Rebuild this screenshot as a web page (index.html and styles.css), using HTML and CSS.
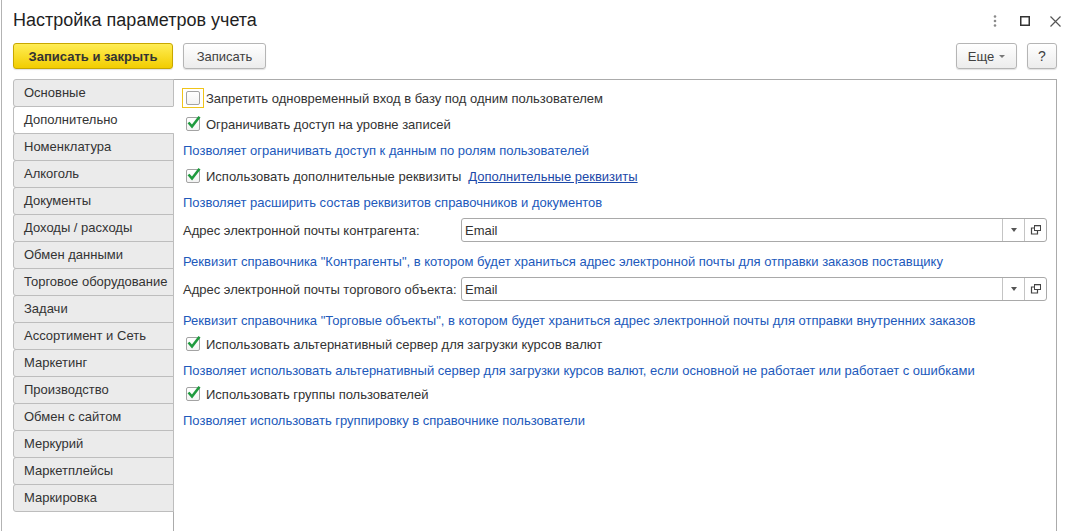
FILE: index.html
```html
<!DOCTYPE html>
<html lang="ru">
<head>
<meta charset="utf-8">
<title>Настройка параметров учета</title>
<link rel="stylesheet" href="styles.css">
</head>
<body>
<div class="window">
  <div class="titlebar">
    <h1 class="title">Настройка параметров учета</h1>
    <div class="win-icons">
      <span class="wi"><svg width="4" height="12" viewBox="0 0 4 12"><circle cx="2" cy="1.5" r="1.3" fill="#8a8a8a"/><circle cx="2" cy="6" r="1.3" fill="#8a8a8a"/><circle cx="2" cy="10.5" r="1.3" fill="#8a8a8a"/></svg></span>
      <span class="wi"><svg width="10" height="10" viewBox="0 0 10 10"><rect x="0.75" y="0.75" width="8.5" height="8.5" fill="none" stroke="#333" stroke-width="1.5"/></svg></span>
      <span class="wi"><svg width="11" height="11" viewBox="0 0 11 11"><path d="M0.5 0.5 L10.5 10.5 M10.5 0.5 L0.5 10.5" stroke="#555" stroke-width="1.2" fill="none"/></svg></span>
    </div>
  </div>

  <div class="toolbar">
    <button class="btn btn-primary">Записать и закрыть</button>
    <button class="btn btn-save">Записать</button>
    <div class="toolbar-right">
      <button class="btn btn-more">Еще <span class="caret"></span></button>
      <button class="btn btn-help">?</button>
    </div>
  </div>

  <div class="main">
    <ul class="tabs">
      <li class="tab">Основные</li>
      <li class="tab active">Дополнительно</li>
      <li class="tab">Номенклатура</li>
      <li class="tab">Алкоголь</li>
      <li class="tab">Документы</li>
      <li class="tab">Доходы / расходы</li>
      <li class="tab">Обмен данными</li>
      <li class="tab">Торговое оборудование</li>
      <li class="tab">Задачи</li>
      <li class="tab">Ассортимент и Сеть</li>
      <li class="tab">Маркетинг</li>
      <li class="tab">Производство</li>
      <li class="tab">Обмен с сайтом</li>
      <li class="tab">Меркурий</li>
      <li class="tab">Маркетплейсы</li>
      <li class="tab">Маркировка</li>
    </ul>

    <div class="panel">
      <div class="row cb-row">
        <span class="cb focused"><span class="box"></span></span>
        <span class="cb-label">Запретить одновременный вход в базу под одним пользователем</span>
      </div>
      <div class="row cb-row">
        <span class="cb"><span class="box"></span><svg class="check" width="17" height="15" viewBox="0 0 17 15"><path d="M3.5 7.5 L7 11.5 L14.5 1.8" fill="none" stroke="#1f9a3e" stroke-width="2.6"/></svg></span>
        <span class="cb-label">Ограничивать доступ на уровне записей</span>
      </div>
      <div class="row hint">Позволяет ограничивать доступ к данным по ролям пользователей</div>
      <div class="row cb-row">
        <span class="cb"><span class="box"></span><svg class="check" width="17" height="15" viewBox="0 0 17 15"><path d="M3.5 7.5 L7 11.5 L14.5 1.8" fill="none" stroke="#1f9a3e" stroke-width="2.6"/></svg></span>
        <span class="cb-label">Использовать дополнительные реквизиты</span>
        <a class="link" href="#">Дополнительные реквизиты</a>
      </div>
      <div class="row hint">Позволяет расширить состав реквизитов справочников и документов</div>
      <div class="field">
        <span class="field-label">Адрес электронной почты контрагента:</span>
        <div class="combo">
          <span class="combo-text">Email</span>
          <span class="combo-btn"><span class="caret dark"></span></span>
          <span class="combo-btn"><svg width="11" height="10" viewBox="0 0 11 10"><rect x="4.5" y="0.5" width="6" height="5" fill="none" stroke="#444" stroke-width="1"/><path d="M4 3 H1.5 V9 H7.5 V6" fill="none" stroke="#444" stroke-width="1.2"/><path d="M4.5 0.5 H10.5" stroke="#444" stroke-width="1.6"/></svg></span>
        </div>
      </div>
      <div class="row hint after-field">Реквизит справочника "Контрагенты", в котором будет храниться адрес электронной почты для отправки заказов поставщику</div>
      <div class="field">
        <span class="field-label">Адрес электронной почты торгового объекта:</span>
        <div class="combo">
          <span class="combo-text">Email</span>
          <span class="combo-btn"><span class="caret dark"></span></span>
          <span class="combo-btn"><svg width="11" height="10" viewBox="0 0 11 10"><rect x="4.5" y="0.5" width="6" height="5" fill="none" stroke="#444" stroke-width="1"/><path d="M4 3 H1.5 V9 H7.5 V6" fill="none" stroke="#444" stroke-width="1.2"/><path d="M4.5 0.5 H10.5" stroke="#444" stroke-width="1.6"/></svg></span>
        </div>
      </div>
      <div class="row hint after-field">Реквизит справочника "Торговые объекты", в котором будет храниться адрес электронной почты для отправки внутренних заказов</div>
      <div class="row cb-row tight">
        <span class="cb"><span class="box"></span><svg class="check" width="17" height="15" viewBox="0 0 17 15"><path d="M3.5 7.5 L7 11.5 L14.5 1.8" fill="none" stroke="#1f9a3e" stroke-width="2.6"/></svg></span>
        <span class="cb-label">Использовать альтернативный сервер для загрузки курсов валют</span>
      </div>
      <div class="row hint">Позволяет использовать альтернативный сервер для загрузки курсов валют, если основной не работает или работает с ошибками</div>
      <div class="row cb-row tight">
        <span class="cb"><span class="box"></span><svg class="check" width="17" height="15" viewBox="0 0 17 15"><path d="M3.5 7.5 L7 11.5 L14.5 1.8" fill="none" stroke="#1f9a3e" stroke-width="2.6"/></svg></span>
        <span class="cb-label">Использовать группы пользователей</span>
      </div>
      <div class="row hint">Позволяет использовать группировку в справочнике пользователи</div>
    </div>
  </div>
</div>
</body>
</html>
```

FILE: styles.css
```css
html, body {
  margin: 0;
  padding: 0;
  background: #fff;
  overflow: hidden;
}

body {
  font-family: "Liberation Sans", Arial, sans-serif;
  font-size: 13px;
  color: #333;
}

.window {
  margin-left: 1px;
  border-left: 1px solid #b3b3b3;
  height: 531px;
  box-sizing: border-box;
}

/* title bar */
.titlebar {
  height: 43px;
  display: flex;
  align-items: flex-start;
  padding-left: 11px;
  padding-right: 6px;
}

.title {
  margin: 0;
  padding-top: 9px;
  font-size: 18px;
  font-weight: normal;
  line-height: 22px;
  color: #1f1f1f;
}

.win-icons {
  margin-left: auto;
  display: flex;
  padding-top: 15px;
}

.wi {
  width: 30px;
  height: 12px;
  display: flex;
  align-items: center;
  justify-content: center;
}

/* toolbar */
.toolbar {
  display: flex;
  align-items: center;
  gap: 10px;
  padding-left: 11px;
  padding-right: 19px;
  height: 26px;
}

.toolbar-right {
  margin-left: auto;
  display: flex;
  gap: 10px;
}

.btn {
  height: 26px;
  box-sizing: border-box;
  border: 1px solid #b5b5b5;
  border-radius: 3px;
  background: linear-gradient(#ffffff, #ececec);
  box-shadow: 0 1px 1px rgba(0, 0, 0, 0.12);
  font-family: "Liberation Sans", Arial, sans-serif;
  font-size: 13px;
  color: #404040;
  padding: 0;
  display: flex;
  align-items: center;
  justify-content: center;
}

.btn-primary {
  width: 160px;
  font-weight: bold;
  color: #333;
  border-color: #c8a700;
  background: linear-gradient(#ffed55, #f2cd00);
}

.btn-save {
  width: 83px;
}

.btn-more {
  width: 61px;
  gap: 5px;
}

.btn-help {
  width: 30px;
  font-size: 14px;
}

.caret {
  display: inline-block;
  width: 0;
  height: 0;
  border-left: 3px solid transparent;
  border-right: 3px solid transparent;
  border-top: 3px solid #777;
}

.caret.dark {
  border-left-width: 3.5px;
  border-right-width: 3.5px;
  border-top: 4px solid #555;
}

/* main area */
.main {
  display: flex;
  align-items: flex-start;
  margin-top: 10px;
  padding-left: 11px;
  padding-right: 19px;
}

.tabs {
  list-style: none;
  margin: 0 -1px 0 0;
  padding: 0;
  width: 161px;
  flex: none;
  position: relative;
  z-index: 1;
}

.tab {
  height: 28px;
  box-sizing: border-box;
  margin-top: -1px;
  border: 1px solid #bdbdbd;
  border-radius: 3px 0 0 3px;
  background: #ebebeb;
  padding-left: 10px;
  padding-bottom: 1px;
  display: flex;
  align-items: center;
  color: #333;
  white-space: nowrap;
}

.tab:first-child {
  margin-top: 0;
}

.tab.active {
  background: #fff;
  border-right-color: #fff;
}

.panel {
  flex: 1;
  height: 470px;
  box-sizing: border-box;
  border: 1px solid #ababab;
  border-bottom: none;
  padding: 8px 9px 0 9px;
  display: flex;
  flex-direction: column;
  gap: 6px;
}

.row {
  height: 20px;
  display: flex;
  align-items: center;
  white-space: nowrap;
}

.cb {
  position: relative;
  width: 22px;
  height: 20px;
  box-sizing: border-box;
  margin-left: -1px;
  display: flex;
  align-items: center;
  justify-content: center;
  flex: none;
}

.cb.focused {
  border: 1px solid #f0c419;
}

.box {
  width: 14px;
  height: 14px;
  box-sizing: border-box;
  border: 1px solid #a3a3a3;
  border-radius: 2px;
  background: linear-gradient(#ffffff, #f3f3f3);
}

.check {
  position: absolute;
  left: 3px;
  top: 1px;
}

.cb-label {
  margin-left: 2px;
  color: #333;
}

.link {
  margin-left: 7px;
  color: #1c48a8;
  text-decoration: underline;
}

.hint {
  color: #2159bb;
}

.hint.after-field {
  margin-top: 3px;
}

.cb-row.tight {
  margin-top: -2px;
}

.field {
  height: 24px;
  display: flex;
  align-items: center;
}

.field-label {
  width: 278px;
  flex: none;
  white-space: nowrap;
}

.combo {
  flex: 1;
  height: 24px;
  box-sizing: border-box;
  border: 1px solid #a9a9a9;
  border-radius: 3px;
  display: flex;
  align-items: stretch;
}

.combo-text {
  flex: 1;
  padding-left: 3px;
  display: flex;
  align-items: center;
  color: #333;
}

.combo-btn {
  width: 21px;
  border-left: 1px solid #c4c4c4;
  display: flex;
  align-items: center;
  justify-content: center;
}
```
